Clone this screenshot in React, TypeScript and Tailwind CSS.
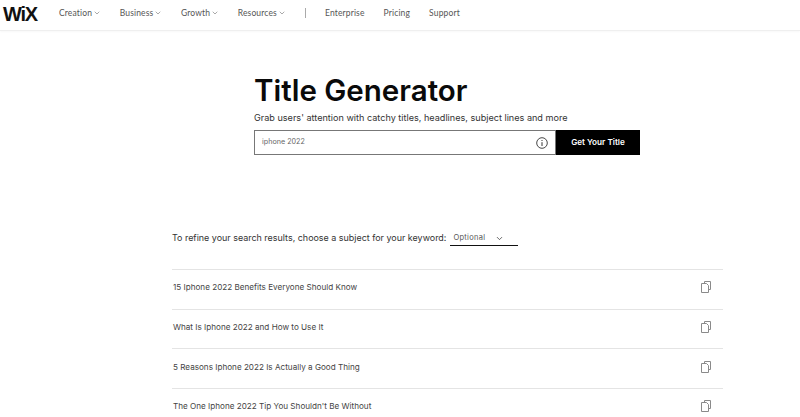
import { ChevronDown } from "lucide-react";

const navLeft = ["Creation", "Business", "Growth", "Resources"];
const navRight = ["Enterprise", "Pricing", "Support"];
const titles = [
  "15 Iphone 2022 Benefits Everyone Should Know",
  "What Is Iphone 2022 and How to Use It",
  "5 Reasons Iphone 2022 Is Actually a Good Thing",
  "The One Iphone 2022 Tip You Shouldn't Be Without",
];

function CopyIcon() {
  return (
    <svg width="10" height="12" viewBox="0 0 10 12" fill="none" stroke="#8a8a8a" strokeWidth="1">
      <path d="M3.5 2V0.5H9.5V8.5H8" />
      <path d="M0.5 2.5H5.5L7.5 4.5V11.5H0.5Z" fill="white" />
    </svg>
  );
}

export default function App() {
  return (
    <div className="w-[800px] h-[417px] overflow-hidden bg-white text-[#222] font-['Inter','Liberation_Sans',sans-serif]">
      <header className="h-[31px] flex items-center border-b border-[#efefef] shadow-[0_1px_2px_rgba(0,0,0,0.03)]">
        <span className="w-[59px] pl-[3px] text-[20px] font-bold tracking-[-1.2px] text-[#111] leading-none mb-[3px] font-['Liberation_Sans',sans-serif]">
          WiX
        </span>
        <nav className="flex items-center text-[8.5px] text-[#555] font-['Lato',sans-serif] tracking-[0.15px] mb-[4px]">
          <div className="flex gap-[18.6px]">
            {navLeft.map((item) => (
              <span key={item} className="flex items-center gap-[1px]">
                {item}
                <ChevronDown size={8} strokeWidth={1.5} />
              </span>
            ))}
          </div>
          <div className="w-px h-[10px] bg-[#aaa] ml-[19px] mr-[19px]" />
          <div className="flex gap-[19px]">
            {navRight.map((item) => (
              <span key={item}>{item}</span>
            ))}
          </div>
        </nav>
      </header>

      <main className="pl-[254px] pt-[41px]">
        <h1 className="text-[29.5px] leading-[36px] font-semibold text-[#0a0a0a]">Title Generator</h1>
        <p className="mt-[3px] text-[9.1px] leading-[14px] text-[#333]">
          Grab users' attention with catchy titles, headlines, subject lines and more
        </p>
        <div className="mt-[5px] flex w-[386px] h-[25px]">
          <div className="w-[302px] flex items-center justify-between border border-[#777] pl-[7px] pr-[7px]">
            <span className="text-[7.2px] text-[#666]">iphone 2022</span>
            <svg width="12" height="12" viewBox="0 0 12 12" fill="none" stroke="#333">
              <circle cx="6" cy="6" r="5.3" strokeWidth="0.9" />
              <path d="M6 5.2V9" strokeWidth="1" />
              <path d="M6 3V4" strokeWidth="1" />
            </svg>
          </div>
          <button className="flex-1 bg-black text-white text-[8.2px] font-semibold">Get Your Title</button>
        </div>
      </main>

      <section className="ml-[172px] w-[551px] mt-[73px]">
        <div className="flex items-center h-[20px] text-[8.95px] text-[#333]">
          <span>To refine your search results, choose a subject for your keyword:</span>
          <div className="ml-[4px] w-[68px] h-[14px] flex items-center border-b border-[#111] pl-[3px] text-[7.5px] text-[#555] tracking-[0.3px] mt-[1px]">
            Optional
            <ChevronDown size={9} strokeWidth={1.8} className="ml-[10px] text-[#222]" />
          </div>
        </div>
        <ul className="mt-[21px]">
          {titles.map((title) => (
            <li key={title} className="h-[39.7px] pb-[4px] flex items-center justify-between border-t border-[#e4e4e4] pl-px pr-[12px] text-[8.15px] text-[#444]">
              <span>{title}</span>
              <CopyIcon />
            </li>
          ))}
        </ul>
      </section>
    </div>
  );
}
